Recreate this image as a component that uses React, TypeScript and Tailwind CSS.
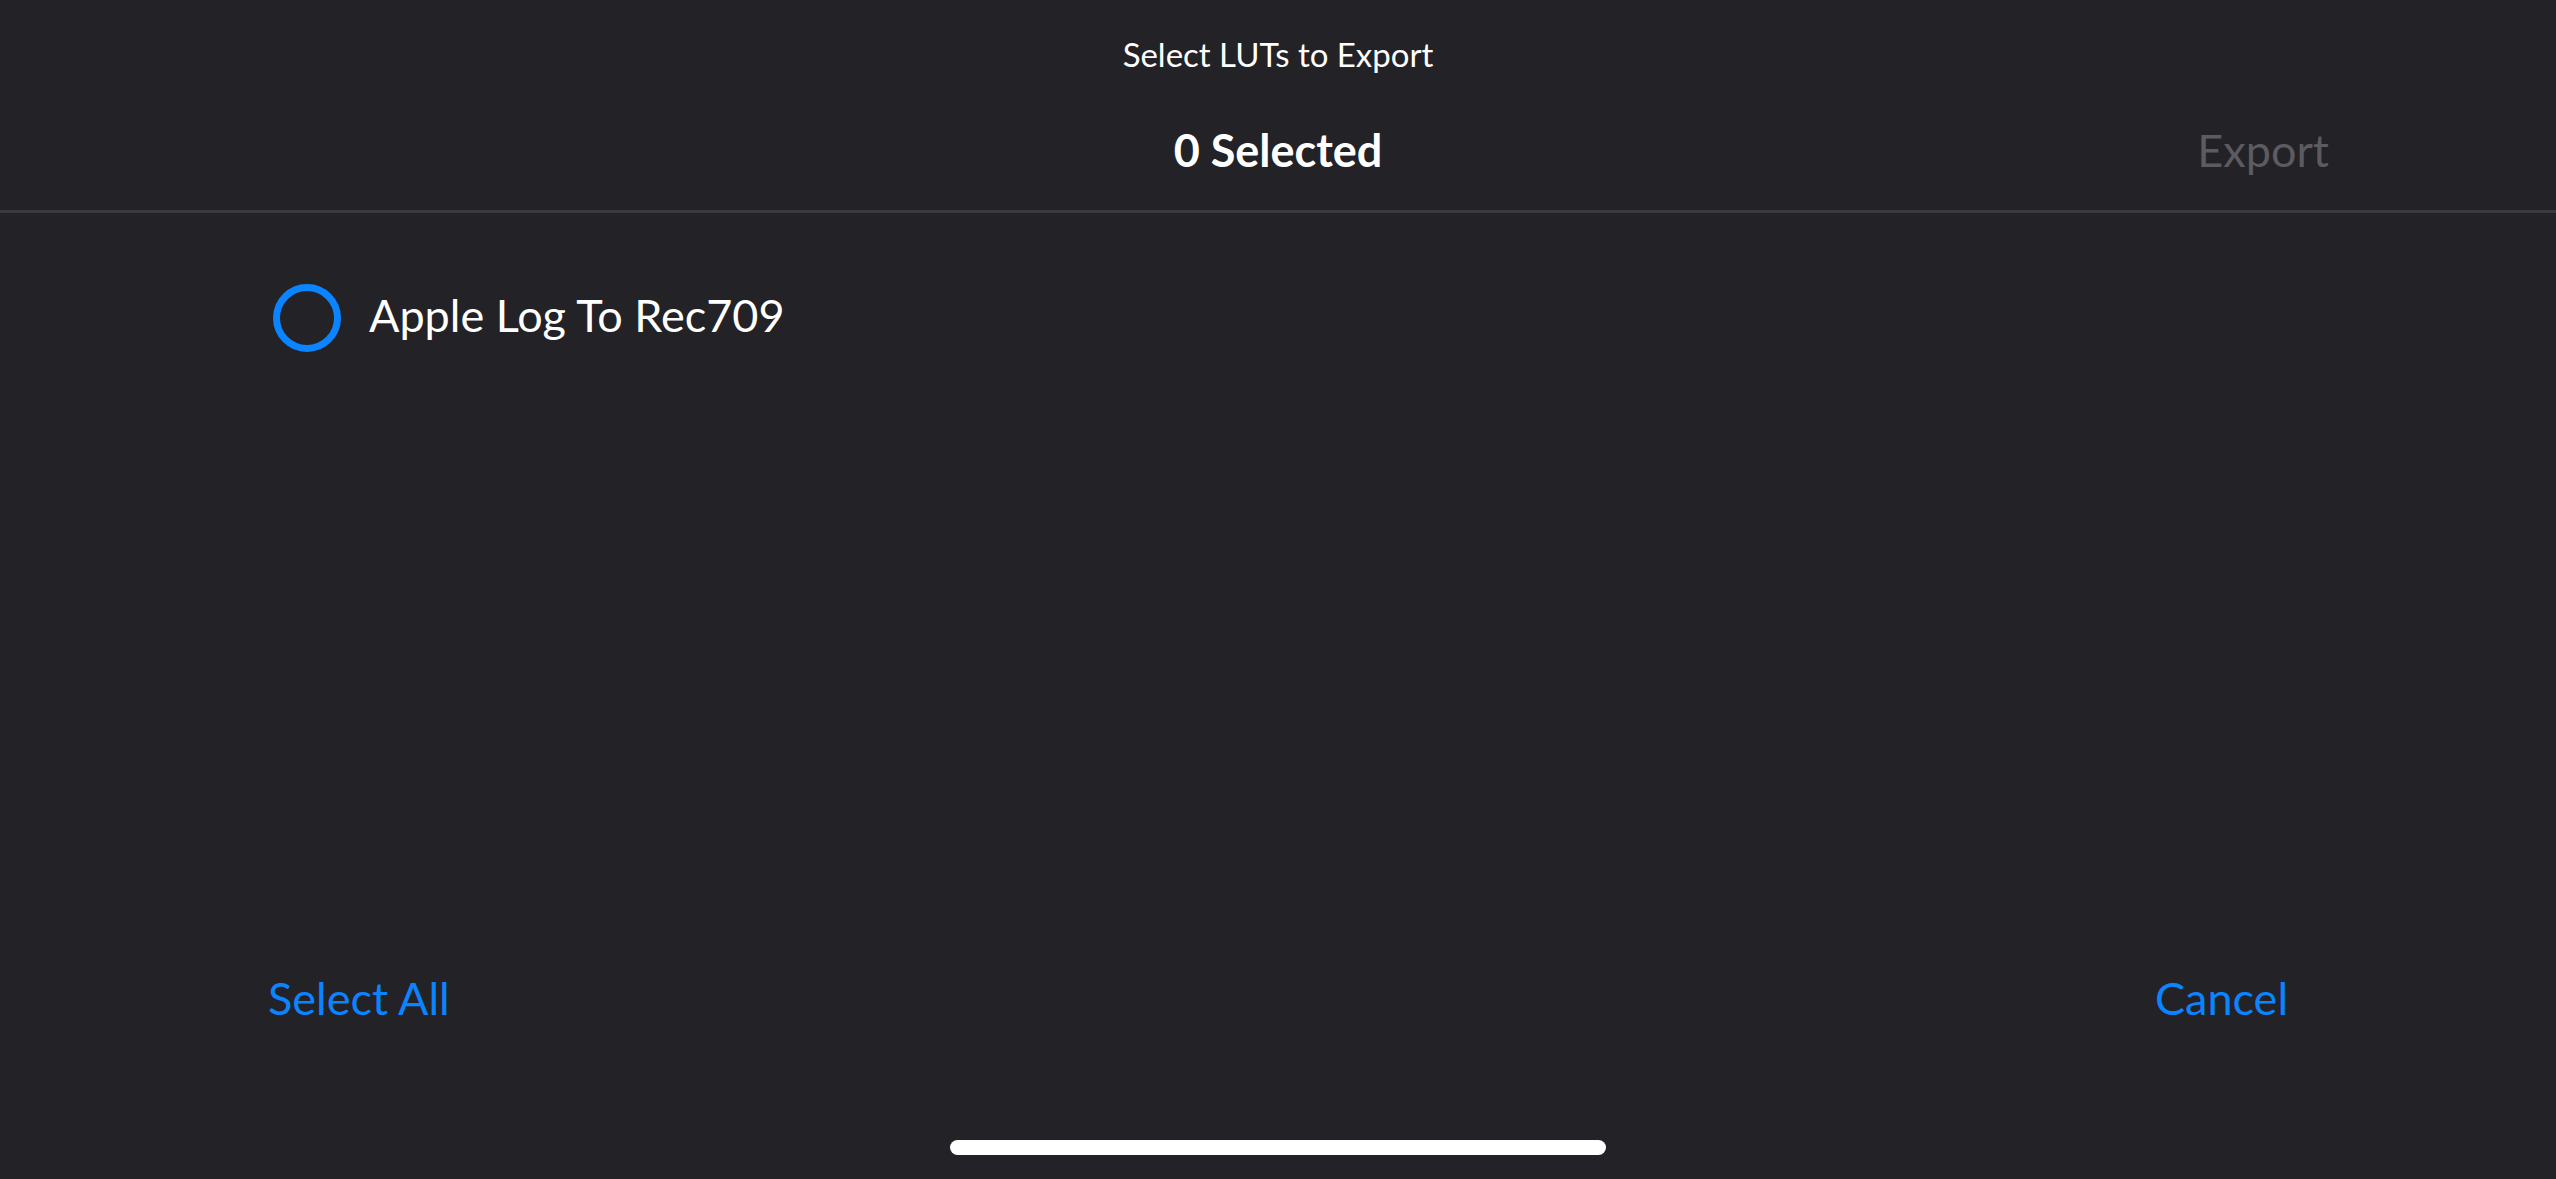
import React, { useState } from "react";

const luts = ["Apple Log To Rec709"];

const App = () => {
  const [selected, setSelected] = useState<string[]>([]);

  const toggle = (name: string) => {
    setSelected((prev) =>
      prev.includes(name) ? prev.filter((n) => n !== name) : [...prev, name]
    );
  };

  const hasSelection = selected.length > 0;

  return (
    <div
      className="flex h-screen w-full flex-col bg-[#222227] text-white"
      style={{ fontFamily: "Lato, 'Open Sans', sans-serif" }}
    >
      {/* Header */}
      <div className="border-b-[3px] border-[#3a3a3e] pt-[38px] pb-[38px]">
        <div className="text-center text-[33px] leading-[32px]">Select LUTs to Export</div>
        <div className="mt-[58px] grid grid-cols-[1fr_auto_1fr] items-center px-[227px]">
          <div />
          <div className="text-[45px] font-bold leading-[44px]">{selected.length} Selected</div>
          <button
            className={
              "justify-self-end text-[45px] leading-[44px] " +
              (hasSelection ? "text-[#0a84ff]" : "text-[#5b5b60]")
            }
          >
            Export
          </button>
        </div>
      </div>

      {/* LUT list */}
      <div className="flex-1 px-[268px] pt-[71px]">
        {luts.map((name) => (
          <button
            key={name}
            onClick={() => toggle(name)}
            className="flex h-[67px] items-center gap-[28px] pl-[5px]"
          >
            <span
              className={
                "h-[68px] w-[68px] rounded-full border-[7px] border-[#0a84ff] " +
                (selected.includes(name) ? "bg-[#0a84ff]" : "")
              }
            />
            <span className="-mt-[5px] text-[45px] leading-[46px]">{name}</span>
          </button>
        ))}
      </div>

      {/* Footer actions */}
      <div className="flex h-[44px] items-center justify-between px-[268px] text-[45px] leading-[44px] text-[#0a84ff]">
        <button onClick={() => setSelected(luts)}>Select All</button>
        <button onClick={() => setSelected([])}>Cancel</button>
      </div>

      {/* Home indicator */}
      <div className="flex justify-center pt-[120px] pb-[24px]">
        <div className="h-[15px] w-[656px] rounded-full bg-white" />
      </div>
    </div>
  );
};

export default App;
